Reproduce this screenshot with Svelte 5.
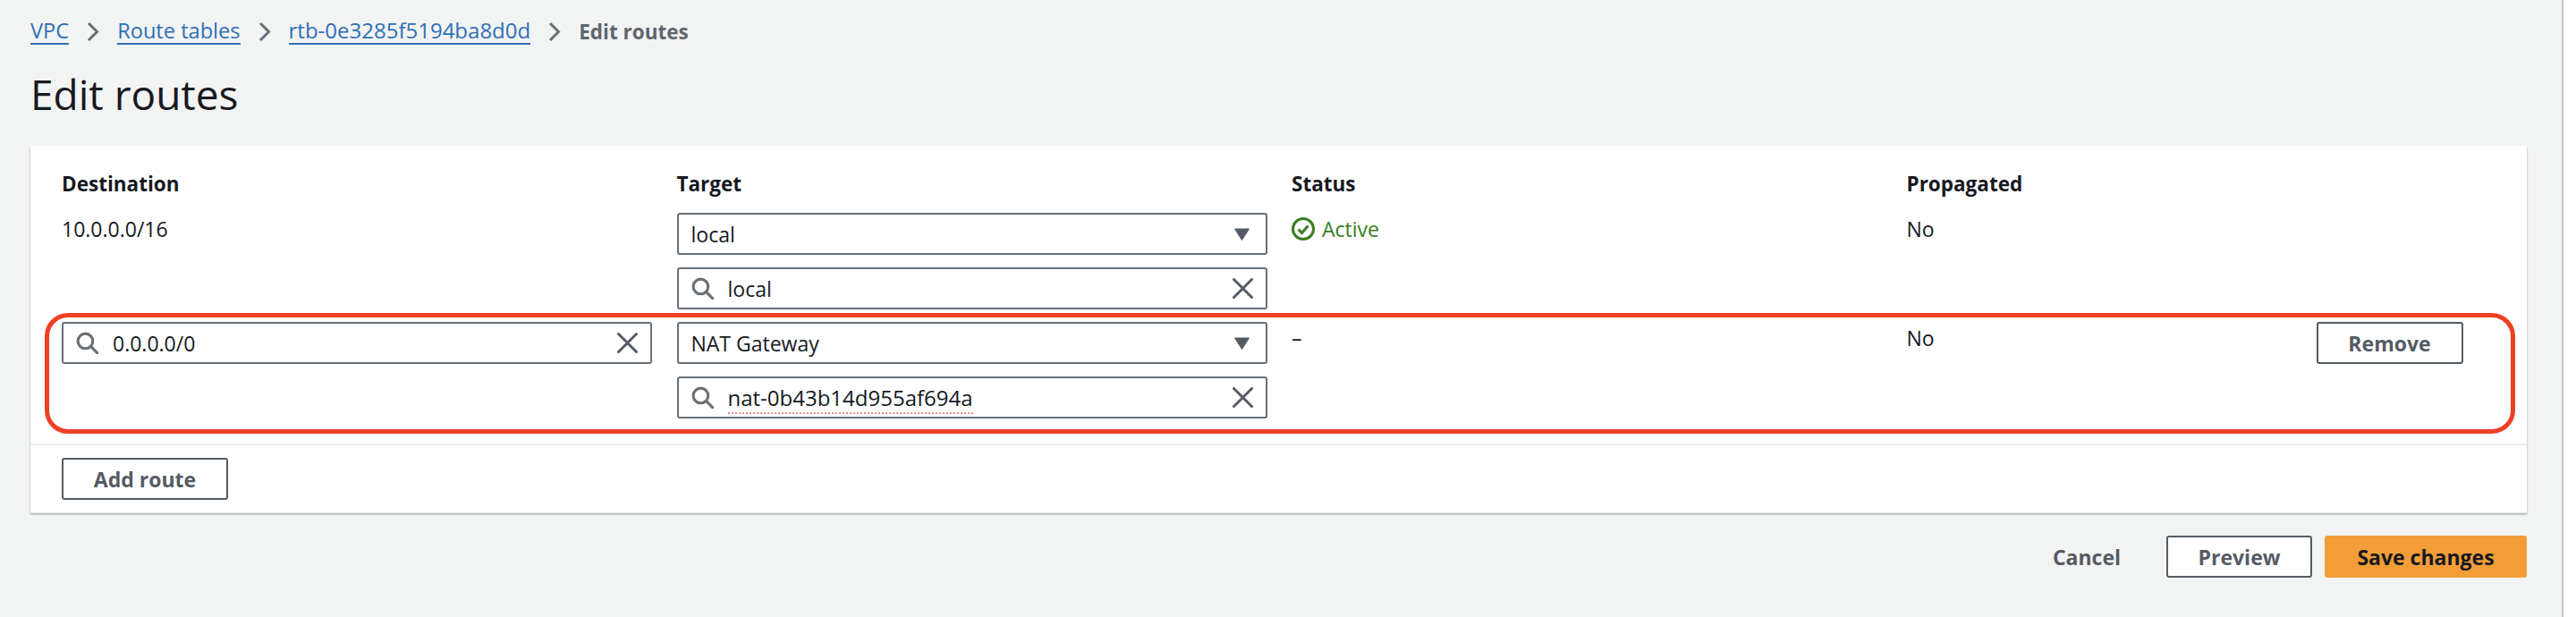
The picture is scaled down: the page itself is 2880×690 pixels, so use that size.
<script>
    const crumbs = [
        { label: "VPC" },
        { label: "Route tables" },
        { label: "rtb-0e3285f5194ba8d0d", id: true }
    ];
</script>

{#snippet searchIcon()}
    <svg class="search-icon" viewBox="0 0 24 24" width="25" height="25" fill="none" stroke="#687078" stroke-width="3">
        <circle cx="10" cy="10" r="8" />
        <path d="M16 16l7 7" stroke-linecap="round" />
    </svg>
{/snippet}

{#snippet clearIcon()}
    <svg class="clear-icon" viewBox="0 0 23 23" width="23" height="23" fill="none" stroke="#545b64" stroke-width="3" stroke-linecap="round">
        <path d="M1.5 1.5l20 20M21.5 1.5l-20 20" />
    </svg>
{/snippet}

{#snippet select(label)}
    <div class="field select">
        <span class="grow">{label}</span>
        <svg class="caret" viewBox="0 0 17 14" width="17" height="14">
            <path d="M0.5 1h16L8.5 13.5z" fill="#545b64" stroke="#545b64" stroke-linejoin="round" />
        </svg>
    </div>
{/snippet}

{#snippet search(label, spell = false)}
    <div class="field">
        {@render searchIcon()}
        <span class="grow"><span class:spell>{label}</span></span>
        {@render clearIcon()}
    </div>
{/snippet}

<div class="page">
    <nav class="crumbs">
        {#each crumbs as crumb}
            <a href="#top" class:id={crumb.id}>{crumb.label}</a>
            <svg viewBox="0 0 14 23" width="14" height="23" fill="none" stroke="#687078" stroke-width="3">
                <path d="M2 2l9.5 9.5L2 21" />
            </svg>
        {/each}
        <span class="current">Edit routes</span>
    </nav>

    <h1>Edit routes</h1>

    <section class="panel">
        <div class="body">
            <div class="grid head">
                <div>Destination</div>
                <div>Target</div>
                <div>Status</div>
                <div>Propagated</div>
            </div>

            <div class="grid row">
                <div class="plain">10.0.0.0/16</div>
                <div class="stack">
                    {@render select("local")}
                    {@render search("local")}
                </div>
                <div class="plain active">
                    <svg viewBox="0 0 26 26" width="26" height="26" fill="none" stroke="#3a7d23">
                        <circle cx="13" cy="13" r="11.5" stroke-width="3" />
                        <path d="M7.5 13.5l4 4 7-8" stroke-width="3" />
                    </svg>
                    Active
                </div>
                <div class="plain">No</div>
            </div>

            <div class="grid row marked">
                <div class="mark"></div>
                <div class="stack">
                    {@render search("0.0.0.0/0")}
                </div>
                <div class="stack">
                    {@render select("NAT Gateway")}
                    {@render search("nat-0b43b14d955af694a", true)}
                </div>
                <div class="plain">–</div>
                <div class="last">
                    <span class="plain">No</span>
                    <button>Remove</button>
                </div>
            </div>
        </div>

        <div class="foot">
            <button class="add">Add route</button>
        </div>
    </section>

    <div class="actions">
        <button class="link">Cancel</button>
        <button class="preview">Preview</button>
        <button class="save">Save changes</button>
    </div>
</div>

<style>
:global(body) {
    background: #fff;
}

.page {
    box-sizing: border-box;
    width: 2866px;
    min-height: 690px;
    padding: 20px 39px 0 34px;
    background: #f2f3f3;
    border-right: 2px solid #c6c9cc;
    color: #16191f;
    font-family: "Open Sans", sans-serif;
    font-size: 23px;
}

.crumbs {
    display: flex;
    align-items: center;
    gap: 20px;
    height: 30px;
}

.crumbs a {
    color: #2f6fb7;
    font-size: 23.6px;
    text-decoration: none;
    border-bottom: 2px solid #2f6fb7;
    line-height: 28px;
}

.crumbs a.id {
    font-size: 24px;
}

.current {
    color: #5f666e;
    font-size: 22.5px;
    font-weight: 700;
}

h1 {
    margin: 28px 0 0;
    font-size: 46px;
    font-weight: 400;
    line-height: 54px;
}

.panel {
    margin-top: 31px;
    background: #fff;
    box-shadow: 0 1px 1px #e4e6e7, 0 2px 2px #8a9196;
}

.body {
    padding: 29px 35px 28px;
    border-bottom: 2px solid #eaeded;
}

.grid {
    display: grid;
    grid-template-columns: 660px 660px 660px 622px;
    column-gap: 27.5px;
}

.head {
    font-size: 22.5px;
    font-weight: 700;
    line-height: 28px;
    margin-bottom: 18px;
}

.row {
    margin-bottom: 14px;
}

.row:last-child {
    margin-bottom: 0;
}

.marked {
    position: relative;
}

.mark {
    position: absolute;
    left: -19px;
    top: -10px;
    width: 2762px;
    height: 135px;
    box-sizing: border-box;
    border: 5px solid #ee4026;
    border-radius: 26px;
    pointer-events: none;
}

.stack {
    display: flex;
    flex-direction: column;
    gap: 14px;
}

.plain {
    line-height: 36px;
}

.active {
    display: flex;
    align-items: center;
    gap: 8px;
    color: #3a7d23;
    height: 36px;
}

.last {
    display: flex;
    justify-content: space-between;
    align-items: flex-start;
}

.field {
    box-sizing: border-box;
    height: 47px;
    display: flex;
    align-items: center;
    padding: 0 14px;
    border: 2px solid #687078;
    border-radius: 3px;
    background: #fff;
}

.select {
    padding-right: 18px;
}

.grow {
    flex: 1;
}

.search-icon {
    margin-right: 16px;
}

.spell {
    font-size: 24px;
    border-bottom: 2px dotted #ef8f8f;
}

button {
    box-sizing: border-box;
    height: 47px;
    padding: 0;
    border: 2px solid #545b64;
    border-radius: 3px;
    background: #fff;
    color: #545b64;
    font: 700 23px "Open Sans", sans-serif;
    width: 164px;
}

.add {
    width: 186px;
}

.foot {
    padding: 14px 35px;
}

.actions {
    display: flex;
    justify-content: flex-end;
    align-items: center;
    gap: 14px;
    margin-top: 26px;
}

.link {
    border: 0;
    background: none;
    width: auto;
    margin-right: 37px;
}

.preview {
    width: 163px;
}

.save {
    width: 226px;
    border: 0;
    background: #f29d38;
    color: #16191f;
}
</style>
